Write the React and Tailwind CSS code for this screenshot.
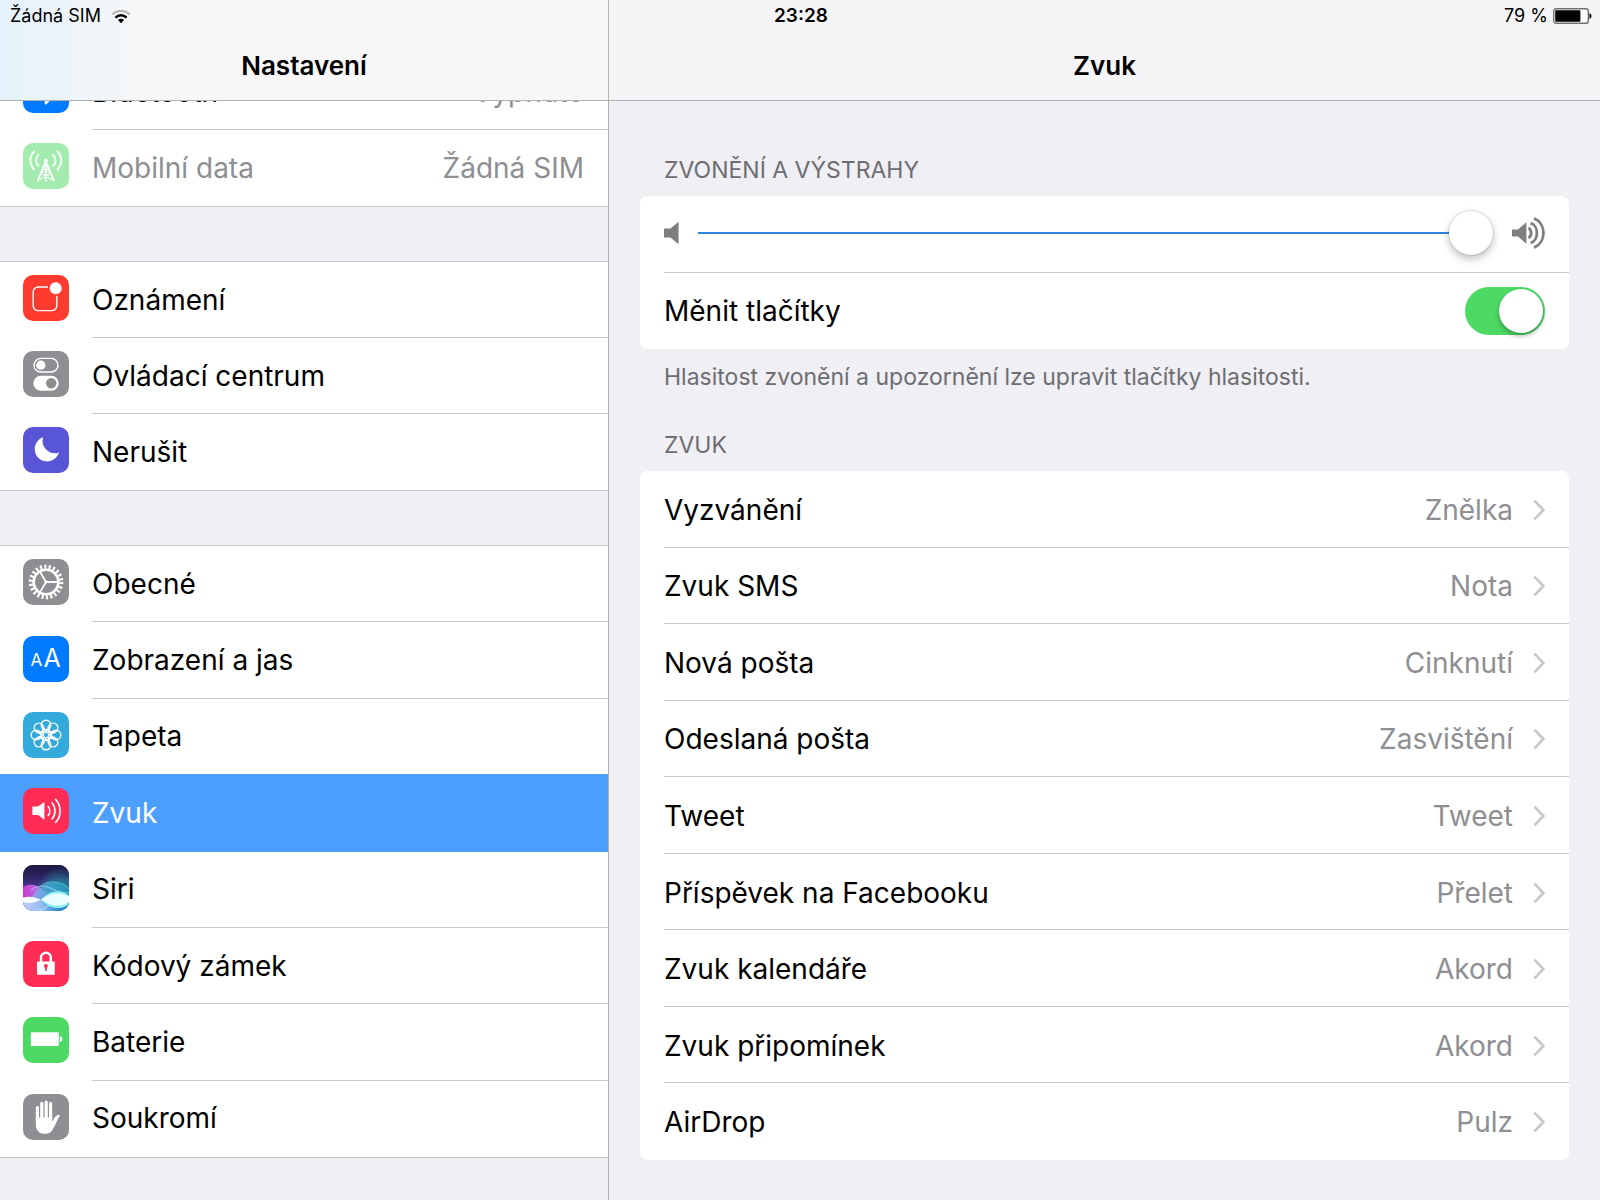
import { useState } from "react";
import clsx from "clsx";

const BluetoothIcon = () => (
    <path d="M14.5 15 L30 29 L22.8 36.5 V8 L31 15.5 L14.5 31" fill="none" stroke="#fff" strokeWidth="2" strokeLinejoin="round" />
);

const CellularIcon = () => (
    <g fill="none" stroke="#fff" strokeWidth="1.8" strokeLinecap="round">
        <path d="M11.2 8.5 C6 13.5 6 21 11.2 26.5" />
        <path d="M15.6 11.8 C12.2 15.2 12.2 19.6 15.6 22.8" />
        <path d="M34.4 8.5 C39.6 13.5 39.6 21 34.4 26.5" />
        <path d="M30 11.8 C33.4 15.2 33.4 19.6 30 22.8" />
        <path d="M22.8 17 V38 M22.8 18 L14.8 37.5 M22.8 18 L30.8 37.5" />
        <path d="M19.8 25.5 L26 29 M25.8 25.5 L19.6 29 M18 30.5 L28.8 36.5 M27.6 30.5 L16.8 36.5" strokeWidth="1.2" />
        <circle cx="22.8" cy="17.5" r="1" fill="#fff" />
    </g>
);

const NotificationIcon = () => (
    <g>
        <rect x="10.2" y="12" width="23.6" height="23.6" rx="5" fill="none" stroke="#fff" strokeWidth="1.4" />
        <circle cx="32.7" cy="13.2" r="8" fill="#ff3b30" />
        <circle cx="32.7" cy="13.2" r="6" fill="#fff" />
    </g>
);

const ControlCenterIcon = () => (
    <g>
        <rect x="11" y="7.4" width="24" height="13.6" rx="6.8" fill="none" stroke="#fff" strokeWidth="1.4" />
        <circle cx="17.8" cy="14.2" r="4.6" fill="#fff" />
        <rect x="10.3" y="24.7" width="25.4" height="15" rx="7.5" fill="#fff" />
        <circle cx="28.2" cy="32.2" r="5.2" fill="#8e8e93" />
    </g>
);

const MoonIcon = () => (
    <path d="M20.2 10.3 A12.4 12.4 0 1 0 36 25.4 A12.2 12.2 0 0 1 20.2 10.3 Z" fill="#fff" />
);

const GearIcon = () => (
    <g fill="none" stroke="#fff">
        <circle cx="23" cy="23" r="15" strokeWidth="4.6" strokeDasharray="2.1 2.184" />
        <circle cx="23" cy="23" r="12.3" strokeWidth="2.6" />
        <circle cx="23" cy="23" r="1.4" fill="#fff" stroke="none" />
        <path d="M23 23 H35 M23 23 L17 12.6 M23 23 L17 33.4" strokeWidth="1.8" />
    </g>
);

const DisplayIcon = () => (
    <g fill="#fff" className="font-['Inter',sans-serif]">
        <text x="7.4" y="29.5" fontSize="17">A</text>
        <text x="20.4" y="31" fontSize="25">A</text>
    </g>
);

const petals = [0, 45, 90, 135, 180, 225, 270, 315];

const WallpaperIcon = () => (
    <g fill="none" stroke="#fff" strokeWidth="1.4">
        {petals.map((angle) => (
            <g key={angle} transform={`rotate(${angle} 23 23)`}>
                <circle cx="23" cy="12.9" r="4.7" />
                <path d="M23 19.8 C20.6 17.6 20.6 15.8 20.4 14.2 M23 19.8 C25.4 17.6 25.4 15.8 25.6 14.2" />
            </g>
        ))}
        <circle cx="23" cy="23" r="2.6" strokeWidth="1" />
    </g>
);

const SoundIcon = () => (
    <g>
        <path d="M9.4 18.6 H15 L21.4 14 V31.8 L15 27 H9.4 Z" fill="#fff" />
        <g fill="none" stroke="#fff" strokeWidth="1.6" strokeLinecap="round">
            <path d="M25.2 18.4 C27.4 21 27.4 24.8 25.2 27.4" />
            <path d="M29 14.8 C33 19.4 33 26.4 29 31" />
            <path d="M32.6 11.4 C38.6 17.8 38.6 28 32.6 34.4" />
        </g>
    </g>
);

const SiriIcon = () => (
    <g>
        <defs>
            <linearGradient id="siriSky" x1="0" y1="0" x2="0" y2="1">
                <stop offset="0" stopColor="#1e1843" />
                <stop offset="0.25" stopColor="#2b2260" />
                <stop offset="0.5" stopColor="#4a3a92" />
                <stop offset="1" stopColor="#6f8fdc" />
            </linearGradient>
            <radialGradient id="siriGlow" cx="0.8" cy="0.55" r="0.5">
                <stop offset="0" stopColor="#1fa9b0" stopOpacity="0.9" />
                <stop offset="1" stopColor="#1fa9b0" stopOpacity="0" />
            </radialGradient>
            <linearGradient id="siriPink" x1="0" y1="0" x2="1" y2="0">
                <stop offset="0" stopColor="#c93bd0" />
                <stop offset="0.5" stopColor="#b787ec" />
                <stop offset="1" stopColor="#4f9be0" stopOpacity="0" />
            </linearGradient>
            <linearGradient id="siriTeal" x1="0" y1="0" x2="1" y2="0">
                <stop offset="0" stopColor="#a9b9f5" />
                <stop offset="0.45" stopColor="#4fb2e0" />
                <stop offset="1" stopColor="#1f93bd" />
            </linearGradient>
            <linearGradient id="siriFloor" x1="0" y1="0" x2="1" y2="0">
                <stop offset="0" stopColor="#c3cdfa" />
                <stop offset="0.4" stopColor="#94bdf2" />
                <stop offset="0.7" stopColor="#3a93d6" />
                <stop offset="1" stopColor="#1f7dbd" />
            </linearGradient>
        </defs>
        <rect width="46" height="46" fill="url(#siriSky)" />
        <rect width="46" height="46" fill="url(#siriGlow)" />
        <path d="M0 22 C7 18 14 20 20 25 C28 32 36 36 46 34 V38 H0 Z" fill="url(#siriPink)" />
        <path d="M0 36 C12 35 16 18 28 17.5 C37 17 42 20 46 25 V40 H0 Z" fill="url(#siriTeal)" opacity="0.75" />
        <path d="M12 27 C18 19 24 17 29 17 C37 17 42 20 46 24" fill="none" stroke="#4fe0cf" strokeWidth="1" opacity="0.8" />
        <path d="M8 25 C14 20 22 20 29 24 C36 27 41 28 46 28" fill="none" stroke="#b9f4ff" strokeWidth="1" opacity="0.6" />
        <path d="M0 35 H46 V46 H0 Z" fill="url(#siriFloor)" />
        <path d="M16 46 C21 44 25 41 28 39" fill="none" stroke="#cfe8ff" strokeWidth="1.4" opacity="0.6" />
        <path d="M0 32.4 C6 31 11 31.4 18 34.6 C11 38.6 6 38.6 0 37 Z" fill="#f4fbff" />
        <path d="M18 34.6 C24 28.4 28 26.4 34 26.4 C40 26.4 43 28.4 46 30.6 V39 C43 41.6 40 43 34 43 C28 43 24 40.6 18 34.6 Z" fill="#8ff0f5" />
        <path d="M18 34.6 C25 30 29 28.6 35 28.6 C40 28.6 43 30 46 31.6 V37.6 C43 39 40 40.6 35 40.6 C29 40.6 25 39 18 34.6 Z" fill="#eafdff" />
    </g>
);

const LockIcon = () => (
    <g>
        <path d="M18 21 V16.6 A4.9 4.9 0 0 1 27.8 16.6 V21" fill="none" stroke="#fff" strokeWidth="2.4" />
        <rect x="14" y="20.4" width="17.8" height="13.4" rx="0.8" fill="#fff" />
        <circle cx="22.9" cy="25" r="2" fill="#ff2d55" />
        <path d="M22.9 25 V30" stroke="#ff2d55" strokeWidth="1.7" />
    </g>
);

const BatteryIcon = () => (
    <g fill="#fff">
        <rect x="7.8" y="15.2" width="28" height="13.8" rx="0.8" />
        <path d="M36.8 19 C40.2 19.6 40.2 24.6 36.8 25.2 Z" />
    </g>
);

const HandIcon = () => (
    <g>
        <g stroke="#fff" strokeWidth="3.2" strokeLinecap="round">
            <path d="M14.4 13.6 V26" />
            <path d="M18.8 9.4 V26" />
            <path d="M23.2 8.2 V26" />
            <path d="M27.6 9.4 V26" />
        </g>
        <path d="M12.8 23.4 H29.2 V27.4 C30.6 26 31.4 22.8 33.8 21.4 C35.2 20.6 36.8 21 37.2 21.4 C34.4 24.6 33 29.8 30.4 34.2 C28.4 38 26.4 39.8 22 39.8 C16.2 39.8 12.8 36 12.8 30.4 Z" fill="#fff" />
    </g>
);

const sidebarGroups = [
    [
        { label: "Bluetooth", value: "Vypnuto", color: "bg-[#007aff]", Icon: BluetoothIcon },
        { label: "Mobilní data", value: "Žádná SIM", color: "bg-[#4cd964]", Icon: CellularIcon, disabled: true },
    ],
    [
        { label: "Oznámení", color: "bg-[#ff3b30]", Icon: NotificationIcon },
        { label: "Ovládací centrum", color: "bg-[#8e8e93]", Icon: ControlCenterIcon },
        { label: "Nerušit", color: "bg-[#5856d6]", Icon: MoonIcon },
    ],
    [
        { label: "Obecné", color: "bg-[#8e8e93]", Icon: GearIcon },
        { label: "Zobrazení a jas", color: "bg-[#007aff]", Icon: DisplayIcon },
        { label: "Tapeta", color: "bg-[#34aadc]", Icon: WallpaperIcon },
        { label: "Zvuk", color: "bg-[#ff2d55]", Icon: SoundIcon },
        { label: "Siri", color: "bg-[#1e1843]", Icon: SiriIcon },
        { label: "Kódový zámek", color: "bg-[#ff2d55]", Icon: LockIcon },
        { label: "Baterie", color: "bg-[#4cd964]", Icon: BatteryIcon },
        { label: "Soukromí", color: "bg-[#8e8e93]", Icon: HandIcon },
    ],
];

const sounds = [
    { label: "Vyzvánění", value: "Znělka" },
    { label: "Zvuk SMS", value: "Nota" },
    { label: "Nová pošta", value: "Cinknutí" },
    { label: "Odeslaná pošta", value: "Zasvištění" },
    { label: "Tweet", value: "Tweet" },
    { label: "Příspěvek na Facebooku", value: "Přelet" },
    { label: "Zvuk kalendáře", value: "Akord" },
    { label: "Zvuk připomínek", value: "Akord" },
    { label: "AirDrop", value: "Pulz" },
];

const StatusBar = () => (
    <div className="absolute inset-x-0 top-0 z-20 grid grid-cols-3 items-center pl-[10px] pr-2 text-[18px] leading-8">
        <div className="flex items-center gap-[10px]">
            <span>Žádná SIM</span>
            <svg width="20" height="15" viewBox="0 0 20 15" fill="none" aria-hidden="true">
                <path d="M1.4 5.4 C6.2 0.6 13.8 0.6 18.6 5.4" stroke="#b5b5b5" strokeWidth="2.2" />
                <path d="M4.4 8.6 C7.6 5.4 12.4 5.4 15.6 8.6" stroke="#000" strokeWidth="2.4" />
                <path d="M6.9 11.1 C8.7 9.3 11.3 9.3 13.1 11.1 L10 14.2 Z" fill="#000" />
            </svg>
        </div>
        <span className="text-center text-[19px] font-semibold">23:28</span>
        <div className="flex items-center justify-end gap-[5px]">
            <span>79 %</span>
            <svg width="39" height="16" viewBox="0 0 39 16" aria-hidden="true">
                <rect x="0.7" y="0.7" width="34.6" height="14.6" rx="2.4" fill="#fff" stroke="#6f6f6f" strokeWidth="1.4" />
                <rect x="2.2" y="2.2" width="25.2" height="11.6" rx="0.8" fill="#000" />
                <path d="M36.4 5.2 C39.2 5.8 39.2 10.2 36.4 10.8 Z" fill="#000" />
            </svg>
        </div>
    </div>
);

const SidebarRow = ({ item, selected, last, onSelect }) => {
    const { label, value, color, Icon, disabled } = item;

    return (
        <a
            href="#nastaveni"
            aria-current={selected ? "page" : undefined}
            onClick={() => onSelect(label)}
            className={clsx("flex min-h-[76px] items-center gap-[23px] pl-[23px]", selected && "-mt-px bg-[#4d9fff] pt-px text-white")}
        >
            <span className={clsx("mb-1 size-[46px] shrink-0 overflow-hidden rounded-[10px]", color, disabled && "opacity-50")}>
                <svg viewBox="0 0 46 46" className="size-full" aria-hidden="true">
                    <Icon />
                </svg>
            </span>
            <span className={clsx("flex flex-1 items-center justify-between self-stretch border-b pr-6", last || selected ? "border-transparent" : "border-[#c8c7cc]")}>
                <span className={clsx(disabled && "text-[#8e8e93]")}>{label}</span>
                {value && <span className="text-[#8e8e93]">{value}</span>}
            </span>
        </a>
    );
};

const Sidebar = () => {
    const [active, setActive] = useState("Zvuk");

    return (
        <aside className="flex w-[38%] flex-col overflow-hidden">
            <header className="z-10 flex h-[101px] shrink-0 items-end justify-center border-b border-[#b2b2b4] bg-[#f7f7f7] bg-linear-to-r from-[#e5f2fb] to-[#f7f7f7] to-25% pb-[18px]">
                <h1 className="text-[26px] leading-8 font-semibold">Nastavení</h1>
            </header>
            <nav className="-mt-12 flex flex-1 flex-col gap-[54px] pb-[42px]">
                {sidebarGroups.map((group, index) => (
                    <div
                        key={index}
                        className={clsx("grid auto-rows-fr border-y border-[#c8c7cc] bg-white", index === sidebarGroups.length - 1 && "flex-1")}
                    >
                        {group.map((item, i) => (
                            <SidebarRow key={item.label} item={item} selected={item.label === active} last={i === group.length - 1} onSelect={setActive} />
                        ))}
                    </div>
                ))}
            </nav>
        </aside>
    );
};

const SoundRow = ({ label, value, last }) => (
    <button type="button" className="flex min-h-[76px] pl-6 text-left">
        <span className={clsx("flex flex-1 items-center self-stretch border-b pt-[2px] pr-6", last ? "border-transparent" : "border-[#c8c7cc]")}>
            <span className="flex-1">{label}</span>
            <span className="mr-5 text-[#8e8e93]">{value}</span>
            <svg width="12" height="22" viewBox="0 0 12 22" fill="none" stroke="#c7c7cc" strokeWidth="2.6" aria-hidden="true">
                <path d="M1.4 1.6 L10.4 11 L1.4 20.4" />
            </svg>
        </span>
    </button>
);

const SoundSettings = () => {
    const [volume, setVolume] = useState(100);
    const [useButtons, setUseButtons] = useState(true);

    return (
        <main className="flex flex-1 flex-col border-l border-[#b2b2b4]">
            <header className="flex h-[101px] shrink-0 items-end justify-center border-b border-[#b2b2b4] bg-[#f5f5f8] pb-[18px]">
                <h2 className="text-[26px] leading-8 font-semibold">Zvuk</h2>
            </header>

            <div className="flex flex-1 flex-col px-[31px] pb-10">
                <h3 className="mt-[53px] mb-[10px] px-6 text-[23px] leading-8 text-[#6d6d72]">ZVONĚNÍ A VÝSTRAHY</h3>
                <section className="rounded-[7px] bg-white pl-6">
                    <div className="flex h-[77px] items-center border-b border-[#c8c7cc] pr-6 pb-[2px]">
                        <svg width="15" height="24" viewBox="0 0 15 24" fill="#7f7f7f" aria-hidden="true">
                            <path d="M0 7.6 H6.4 L14.6 0.8 V23.2 L6.4 16.4 H0 Z" />
                        </svg>
                        <input
                            type="range"
                            min="0"
                            max="100"
                            value={volume}
                            onChange={(e) => setVolume(Number(e.target.value))}
                            aria-label="Hlasitost"
                            className="mx-[19px] h-11 min-w-0 flex-1 cursor-pointer appearance-none bg-transparent [&::-webkit-slider-runnable-track]:h-[2px] [&::-webkit-slider-runnable-track]:bg-[#2d86d9] [&::-webkit-slider-thumb]:-mt-[21px] [&::-webkit-slider-thumb]:size-11 [&::-webkit-slider-thumb]:appearance-none [&::-webkit-slider-thumb]:rounded-full [&::-webkit-slider-thumb]:bg-white [&::-webkit-slider-thumb]:shadow-[0_0_1px_1px_rgba(0,0,0,0.1),0_4px_8px_rgba(0,0,0,0.25)]"
                        />
                        <svg width="33" height="32" viewBox="0 0 33 32" fill="none" stroke="#7f7f7f" strokeWidth="2.8" aria-hidden="true">
                            <path d="M0 12.4 H6 L14.4 5.2 V26.8 L6 19.6 H0 Z" fill="#7f7f7f" stroke="none" />
                            <path d="M16.4 11.2 C20 12.4 20 19.6 16.4 20.8" />
                            <path d="M18.6 6.2 C27 8.4 27 23.6 18.6 25.8" />
                            <path d="M22 1.4 C34.6 6.4 34.6 25.6 22 30.6" />
                        </svg>
                    </div>
                    <div className="flex h-[76px] items-center justify-between pr-6">
                        <label htmlFor="buttons">Měnit tlačítky</label>
                        <input
                            id="buttons"
                            type="checkbox"
                            role="switch"
                            checked={useButtons}
                            onChange={(e) => setUseButtons(e.target.checked)}
                            className="flex h-12 w-20 cursor-pointer appearance-none items-center rounded-full bg-[#e5e5ea] px-[2px] before:size-11 before:rounded-full before:bg-white before:shadow-[0_3px_5px_rgba(0,0,0,0.3)] checked:justify-end checked:bg-[#4cd964]"
                        />
                    </div>
                </section>
                <p className="mt-3 px-6 text-[23px] leading-8 text-[#6d6d72]">
                    Hlasitost zvonění a upozornění lze upravit tlačítky hlasitosti.
                </p>

                <h3 className="mt-9 mb-[10px] px-6 text-[23px] leading-8 text-[#6d6d72]">ZVUK</h3>
                <section className="grid flex-1 auto-rows-fr rounded-[7px] bg-white">
                    {sounds.map((sound, i) => (
                        <SoundRow key={sound.label} {...sound} last={i === sounds.length - 1} />
                    ))}
                </section>
            </div>
        </main>
    );
};

const App = () => (
    <div className="relative flex min-h-screen bg-[#efeff4] font-['Inter',sans-serif] text-[28px] leading-9 text-black">
        <StatusBar />
        <Sidebar />
        <SoundSettings />
    </div>
);

export default App;
